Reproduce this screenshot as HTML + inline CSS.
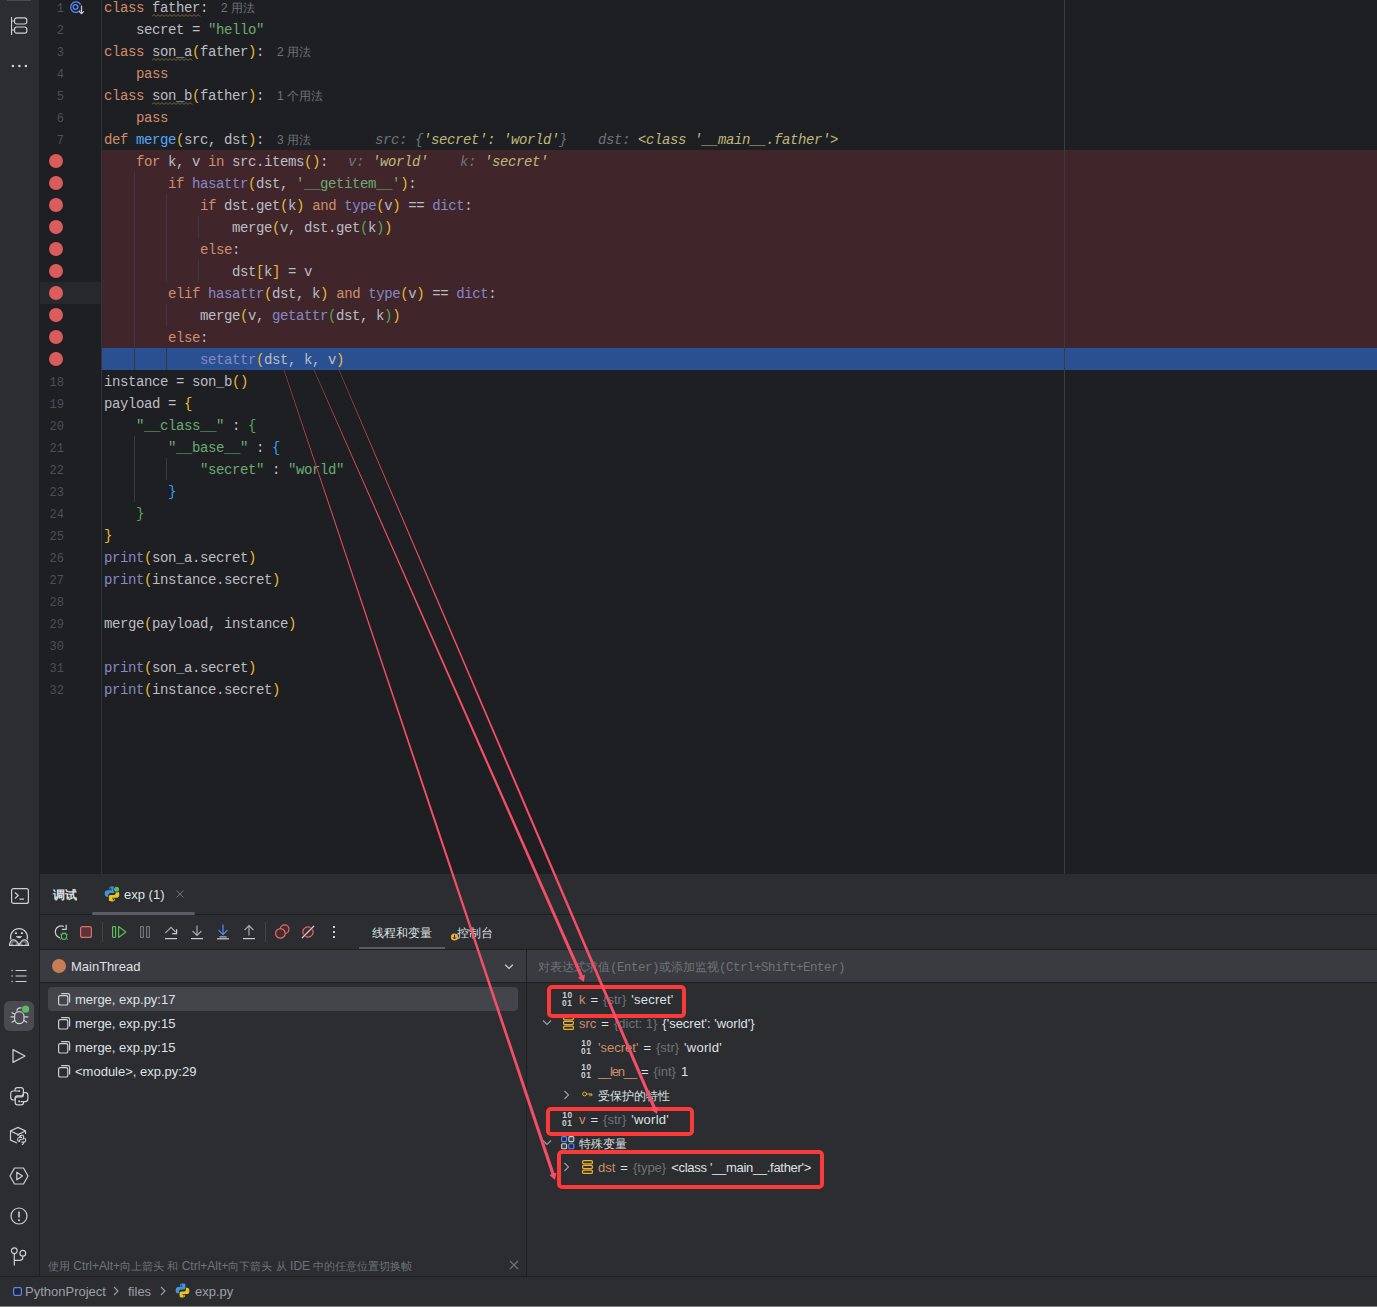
<!DOCTYPE html>
<html><head><meta charset="utf-8">
<style>
*{margin:0;padding:0;box-sizing:border-box}
html,body{width:1377px;height:1307px;overflow:hidden;background:#2b2d30}
body{position:relative;font-family:"Liberation Sans",sans-serif}
.abs{position:absolute}
#ltb{left:0;top:0;width:39px;height:1276px;background:#2b2d30}
#ed{left:39px;top:0;width:1338px;height:874px;background:#1e1f22;overflow:hidden}
#gutline{left:62px;top:0;width:1px;height:874px;background:#313438}
#rmargin{left:1025px;top:0;width:1px;height:874px;background:#393b40}
.row{position:absolute;left:63px;width:1275px;height:22px}
.bp{background:#40262b}
.ex{background:#2a5092}
.code{position:absolute;margin-top:1px;left:65px;font-family:"Liberation Mono",monospace;font-size:14px;letter-spacing:-0.4px;line-height:22px;white-space:pre;color:#bcbec4}
.ln{position:absolute;left:0;margin-top:2px;width:25px;text-align:right;font-family:"Liberation Mono",monospace;font-size:12px;line-height:22px;color:#4b5059}
.dot{position:absolute;left:10px;width:14px;height:14px;border-radius:50%;background:#db5c5c}
.k{color:#cf8e6d}.s{color:#6aab73}.f{color:#56a8f5}.b{color:#8888c6}
.p1{color:#e8ba36}.p2{color:#54a857}.p3{color:#359ff4}
.hint{font-family:"Liberation Sans",sans-serif;font-size:12px;color:#6f737a;margin-left:5px;letter-spacing:0}
.iv{font-style:italic;color:#6f737a}.ivv{font-style:italic;color:#bfb87c}
.sq{}
.ui{font-family:"Liberation Sans",sans-serif}.mono{font-family:"Liberation Mono",monospace}.bold{font-weight:bold}
.guide{position:absolute;width:1px;background:#393b40}

</style></head><body>
<div id="ltb" class="abs"></div>
<div class="abs" style="left:39px;top:0;width:1px;height:1276px;background:#1e1f22;z-index:1"></div>
<div id="ed" class="abs">
<div class="row" style="top:-4px"></div>
<div class="row" style="top:18px"></div>
<div class="row" style="top:40px"></div>
<div class="row" style="top:62px"></div>
<div class="row" style="top:84px"></div>
<div class="row" style="top:106px"></div>
<div class="row" style="top:128px"></div>
<div class="row bp" style="top:150px"></div>
<div class="row bp" style="top:172px"></div>
<div class="row bp" style="top:194px"></div>
<div class="row bp" style="top:216px"></div>
<div class="row bp" style="top:238px"></div>
<div class="row bp" style="top:260px"></div>
<div class="row bp" style="top:282px"></div>
<div class="row bp" style="top:304px"></div>
<div class="row bp" style="top:326px"></div>
<div class="row ex" style="top:348px"></div>
<div class="row" style="top:370px"></div>
<div class="row" style="top:392px"></div>
<div class="row" style="top:414px"></div>
<div class="row" style="top:436px"></div>
<div class="row" style="top:458px"></div>
<div class="row" style="top:480px"></div>
<div class="row" style="top:502px"></div>
<div class="row" style="top:524px"></div>
<div class="row" style="top:546px"></div>
<div class="row" style="top:568px"></div>
<div class="row" style="top:590px"></div>
<div class="row" style="top:612px"></div>
<div class="row" style="top:634px"></div>
<div class="row" style="top:656px"></div>
<div class="row" style="top:678px"></div>
<div class="abs" style="left:1px;top:282px;width:61px;height:22px;background:#26282b"></div>
<div id="gutline" class="abs"></div>
<div class="guide" style="left:95px;top:172px;height:198px"></div><div class="guide" style="left:127px;top:194px;height:88px"></div><div class="guide" style="left:127px;top:304px;height:22px"></div><div class="guide" style="left:127px;top:348px;height:22px"></div><div class="guide" style="left:159px;top:216px;height:22px"></div><div class="guide" style="left:159px;top:260px;height:22px"></div><div class="guide" style="left:95px;top:436px;height:66px"></div><div class="guide" style="left:127px;top:458px;height:22px"></div>
<div class="ln" style="top:-4px">1</div>
<div class="ln" style="top:18px">2</div>
<div class="ln" style="top:40px">3</div>
<div class="ln" style="top:62px">4</div>
<div class="ln" style="top:84px">5</div>
<div class="ln" style="top:106px">6</div>
<div class="ln" style="top:128px">7</div>
<div class="dot" style="top:154px"></div>
<div class="dot" style="top:176px"></div>
<div class="dot" style="top:198px"></div>
<div class="dot" style="top:220px"></div>
<div class="dot" style="top:242px"></div>
<div class="dot" style="top:264px"></div>
<div class="dot" style="top:286px"></div>
<div class="dot" style="top:308px"></div>
<div class="dot" style="top:330px"></div>
<div class="dot" style="top:352px"></div>
<div class="ln" style="top:370px">18</div>
<div class="ln" style="top:392px">19</div>
<div class="ln" style="top:414px">20</div>
<div class="ln" style="top:436px">21</div>
<div class="ln" style="top:458px">22</div>
<div class="ln" style="top:480px">23</div>
<div class="ln" style="top:502px">24</div>
<div class="ln" style="top:524px">25</div>
<div class="ln" style="top:546px">26</div>
<div class="ln" style="top:568px">27</div>
<div class="ln" style="top:590px">28</div>
<div class="ln" style="top:612px">29</div>
<div class="ln" style="top:634px">30</div>
<div class="ln" style="top:656px">31</div>
<div class="ln" style="top:678px">32</div>
<div class="code" style="top:-4px"><span class="k">class</span> <span class="sq">father</span>: <span class="hint">2 用法</span></div>
<div class="code" style="top:18px">    secret = <span class="s">&quot;hello&quot;</span></div>
<div class="code" style="top:40px"><span class="k">class</span> <span class="sq">son_a</span><span class="p1">(</span>father<span class="p1">)</span>: <span class="hint">2 用法</span></div>
<div class="code" style="top:62px">    <span class="k">pass</span></div>
<div class="code" style="top:84px"><span class="k">class</span> <span class="sq">son_b</span><span class="p1">(</span>father<span class="p1">)</span>: <span class="hint">1 个用法</span></div>
<div class="code" style="top:106px">    <span class="k">pass</span></div>
<div class="code" style="top:128px"><span class="k">def</span> <span class="f">merge</span><span class="p1">(</span>src, dst<span class="p1">)</span>: <span class="hint">3 用法</span></div>
<div class="code" style="top:150px">    <span class="k">for</span> k, v <span class="k">in</span> src.items<span class="p1">()</span>:</div>
<div class="code" style="top:172px">        <span class="k">if</span> <span class="b">hasattr</span><span class="p1">(</span>dst, <span class="s">&#x27;__getitem__&#x27;</span><span class="p1">)</span>:</div>
<div class="code" style="top:194px">            <span class="k">if</span> dst.get<span class="p1">(</span>k<span class="p1">)</span> <span class="k">and</span> <span class="b">type</span><span class="p1">(</span>v<span class="p1">)</span> == <span class="b">dict</span>:</div>
<div class="code" style="top:216px">                merge<span class="p1">(</span>v, dst.get<span class="p2">(</span>k<span class="p2">)</span><span class="p1">)</span></div>
<div class="code" style="top:238px">            <span class="k">else</span>:</div>
<div class="code" style="top:260px">                dst<span class="p1">[</span>k<span class="p1">]</span> = v</div>
<div class="code" style="top:282px">        <span class="k">elif</span> <span class="b">hasattr</span><span class="p1">(</span>dst, k<span class="p1">)</span> <span class="k">and</span> <span class="b">type</span><span class="p1">(</span>v<span class="p1">)</span> == <span class="b">dict</span>:</div>
<div class="code" style="top:304px">            merge<span class="p1">(</span>v, <span class="b">getattr</span><span class="p2">(</span>dst, k<span class="p2">)</span><span class="p1">)</span></div>
<div class="code" style="top:326px">        <span class="k">else</span>:</div>
<div class="code" style="top:348px">            <span class="b">setattr</span><span class="p1">(</span>dst, k, v<span class="p1">)</span></div>
<div class="code" style="top:370px">instance = son_b<span class="p1">()</span></div>
<div class="code" style="top:392px">payload = <span class="p1">{</span></div>
<div class="code" style="top:414px">    <span class="s">&quot;__class__&quot;</span> : <span class="p2">{</span></div>
<div class="code" style="top:436px">        <span class="s">&quot;__base__&quot;</span> : <span class="p3">{</span></div>
<div class="code" style="top:458px">            <span class="s">&quot;secret&quot;</span> : <span class="s">&quot;world&quot;</span></div>
<div class="code" style="top:480px">        <span class="p3">}</span></div>
<div class="code" style="top:502px">    <span class="p2">}</span></div>
<div class="code" style="top:524px"><span class="p1">}</span></div>
<div class="code" style="top:546px"><span class="b">print</span><span class="p1">(</span>son_a.secret<span class="p1">)</span></div>
<div class="code" style="top:568px"><span class="b">print</span><span class="p1">(</span>instance.secret<span class="p1">)</span></div>
<div class="code" style="top:590px"></div>
<div class="code" style="top:612px">merge<span class="p1">(</span>payload, instance<span class="p1">)</span></div>
<div class="code" style="top:634px"></div>
<div class="code" style="top:656px"><span class="b">print</span><span class="p1">(</span>son_a.secret<span class="p1">)</span></div>
<div class="code" style="top:678px"><span class="b">print</span><span class="p1">(</span>instance.secret<span class="p1">)</span></div>
<div class="code" style="top:128px;left:336px"><span class="iv">src: </span><span class="ivv"><span class="iv">{</span>'secret': 'world'<span class="iv">}</span></span></div>
<div class="code" style="top:128px;left:559px"><span class="iv">dst: </span><span class="ivv">&lt;class '__main__.father'&gt;</span></div>
<div class="code" style="top:150px;left:309px"><span class="iv">v: </span><span class="ivv">'world'</span></div>
<div class="code" style="top:150px;left:421px"><span class="iv">k: </span><span class="ivv">'secret'</span></div>
<svg class="abs" style="left:113px;top:14px" width="50" height="3"><polyline points="0.0,2.5 2.0,0.5 4.0,2.5 6.0,0.5 8.0,2.5 10.0,0.5 12.0,2.5 14.0,0.5 16.0,2.5 18.0,0.5 20.0,2.5 22.0,0.5 24.0,2.5 26.0,0.5 28.0,2.5 30.0,0.5 32.0,2.5 34.0,0.5 36.0,2.5 38.0,0.5 40.0,2.5 42.0,0.5 44.0,2.5 46.0,0.5 48.0,2.5" fill="none" stroke="#8a7646" stroke-width="0.85"/></svg><svg class="abs" style="left:113px;top:58px" width="42" height="3"><polyline points="0.0,2.5 2.0,0.5 4.0,2.5 6.0,0.5 8.0,2.5 10.0,0.5 12.0,2.5 14.0,0.5 16.0,2.5 18.0,0.5 20.0,2.5 22.0,0.5 24.0,2.5 26.0,0.5 28.0,2.5 30.0,0.5 32.0,2.5 34.0,0.5 36.0,2.5 38.0,0.5 40.0,2.5" fill="none" stroke="#8a7646" stroke-width="0.85"/></svg><svg class="abs" style="left:113px;top:102px" width="42" height="3"><polyline points="0.0,2.5 2.0,0.5 4.0,2.5 6.0,0.5 8.0,2.5 10.0,0.5 12.0,2.5 14.0,0.5 16.0,2.5 18.0,0.5 20.0,2.5 22.0,0.5 24.0,2.5 26.0,0.5 28.0,2.5 30.0,0.5 32.0,2.5 34.0,0.5 36.0,2.5 38.0,0.5 40.0,2.5" fill="none" stroke="#8a7646" stroke-width="0.85"/></svg>
<div id="rmargin" class="abs"></div>
<svg class="abs" style="left:29px;top:0" width="20" height="18" viewBox="0 0 20 18">
 <path d="M12.3 10.2 A5.3 5.3 0 1 1 12.6 4.6" fill="none" stroke="#548af7" stroke-width="1.3"/>
 <circle cx="7.5" cy="7" r="2.4" fill="none" stroke="#548af7" stroke-width="1.3"/>
 <path d="M13.5 5.6 V13.6 M11.2 11.3 L13.5 13.7 L15.8 11.3" fill="none" stroke="#ced0d6" stroke-width="1.2"/>
</svg>
</div>
<!-- left toolbar top icons -->
<div class="abs" style="left:7px;top:0;width:24px;height:1px;background:#4a4c51"></div>
<svg class="abs" style="left:11px;top:17px" width="18" height="18" viewBox="0 0 18 18">
 <path d="M0.5 0 V18 M0.5 4 H3 M0.5 13 H3" fill="none" stroke="#ced0d6" stroke-width="1.2"/>
 <rect x="3.5" y="0.8" width="12.3" height="6.2" rx="2.2" fill="none" stroke="#ced0d6" stroke-width="1.2"/>
 <rect x="3.5" y="10" width="12.3" height="6.2" rx="2.2" fill="none" stroke="#ced0d6" stroke-width="1.2"/>
</svg>
<svg class="abs" style="left:10px;top:62px" width="20" height="8" viewBox="0 0 20 8">
 <circle cx="2.9" cy="4" r="1.3" fill="#ced0d6"/><circle cx="9.4" cy="4" r="1.3" fill="#ced0d6"/><circle cx="15.9" cy="4" r="1.3" fill="#ced0d6"/>
</svg>
<div id="dbg" class="abs" style="left:40px;top:874px;width:1337px;height:402px;background:#2b2d30"></div>
<!-- tabs row -->
<div class="abs ui bold" style="left:53px;top:886px;line-height:18px;font-size:12px;color:#dfe1e5">调试</div>
<svg class="abs" style="left:104px;top:886px" width="16" height="16" viewBox="0 0 16 16">
<path d="M7.8 0.6 C5.2 0.6 5.3 1.8 5.3 1.8 V3.6 H8 V4.3 H3.3 C1.9 4.3 0.7 5.2 0.7 7.6 C0.7 10 1.7 10.9 3 10.9 H4.3 V9.1 C4.3 7.9 5.3 6.9 6.5 6.9 H9.3 C10.4 6.9 11.1 6.1 11.1 5 V2 C11.1 1 10.2 0.6 7.8 0.6 Z" fill="#3f96d8"/>
<path d="M8.2 15.4 C10.8 15.4 10.7 14.2 10.7 14.2 V12.4 H8 V11.7 H12.7 C14.1 11.7 15.3 10.8 15.3 8.4 C15.3 6 14.3 5.1 13 5.1 H11.7 V6.9 C11.7 8.1 10.7 9.1 9.5 9.1 H6.7 C5.6 9.1 4.9 9.9 4.9 11 V14 C4.9 15 5.8 15.4 8.2 15.4 Z" fill="#f0c31a"/>
<circle cx="6.6" cy="2.3" r="0.7" fill="#2b2d30"/><circle cx="9.4" cy="13.7" r="0.7" fill="#2b2d30"/><circle cx="12.6" cy="3.2" r="3.2" fill="#2b2d30"/><circle cx="12.6" cy="3.2" r="2.5" fill="#5fb865"/></svg>
<div class="abs ui" style="left:124px;top:886px;line-height:18px;font-size:13px;color:#dfe1e5">exp (1)</div>
<svg class="abs" style="left:175px;top:889px" width="10" height="10" viewBox="0 0 10 10"><path d="M1.5 1.5 L8.5 8.5 M8.5 1.5 L1.5 8.5" stroke="#6f737a" stroke-width="1"/></svg>
<div class="abs" style="left:40px;top:914px;width:1337px;height:1px;background:#1e1f22"></div>
<div class="abs" style="left:92px;top:912px;width:103px;height:3px;border-radius:2px;background:#5a5d63"></div>
<!-- toolbar -->
<svg class="abs" style="left:40px;top:915px" width="320" height="34" viewBox="40 915 320 34">
 <!-- rerun -->
 <path d="M63.8 926.5 A6 6 0 1 0 60 937.8" fill="none" stroke="#ced0d6" stroke-width="1.2"/>
 <path d="M66.2 924.8 V929.3 H61.8" fill="none" stroke="#ced0d6" stroke-width="1.2"/>
 <ellipse cx="64" cy="936.3" rx="2.6" ry="3.2" fill="#253627" stroke="#5fb865" stroke-width="1.1"/>
 <path d="M60.2 934 L61.5 935 M67.8 934 L66.5 935 M60 939.5 L61.5 938.5 M68 939.5 L66.5 938.5 M62.5 932.8 L63.3 933.5 M65.5 932.8 L64.7 933.5" stroke="#5fb865" stroke-width="1"/>
 <!-- stop -->
 <rect x="80.6" y="926.6" width="10.8" height="10.8" rx="2" fill="#5e3338" stroke="#e06c6c" stroke-width="1.2"/>
 <rect x="102" y="922" width="1" height="20" fill="#43454a"/>
 <!-- resume -->
 <rect x="112.6" y="926.6" width="3" height="10.8" rx="0.8" fill="#253627" stroke="#5fb865" stroke-width="1.2"/>
 <path d="M118.6 926.6 L125.8 932 L118.6 937.4 Z" fill="#253627" stroke="#5fb865" stroke-width="1.2" stroke-linejoin="round"/>
 <!-- pause -->
 <rect x="140.6" y="926.6" width="2.8" height="10.8" rx="0.6" fill="none" stroke="#6f737a" stroke-width="1.2"/>
 <rect x="146.6" y="926.6" width="2.8" height="10.8" rx="0.6" fill="none" stroke="#6f737a" stroke-width="1.2"/>
 <!-- step over -->
 <path d="M165.2 933.2 L171 927.4 L175.6 932" fill="none" stroke="#a8abb0" stroke-width="1.2"/>
 <path d="M172.2 933.6 H176.6 V929.2" fill="none" stroke="#ced0d6" stroke-width="1.2"/>
 <rect x="165" y="938" width="12" height="1.2" fill="#ced0d6"/>
 <!-- step into -->
 <path d="M197 925.4 V935.2 M192.6 931 L197 935.4 L201.4 931" fill="none" stroke="#a8abb0" stroke-width="1.2"/>
 <rect x="191" y="938" width="12" height="1.2" fill="#ced0d6"/>
 <!-- step into my code -->
 <path d="M223 924.6 V934.4 M218.6 930.2 L223 934.6 L227.4 930.2" fill="none" stroke="#548af7" stroke-width="1.2"/>
 <rect x="219.4" y="936.4" width="7.2" height="1" fill="#ced0d6"/>
 <rect x="217" y="938.2" width="12" height="1.2" fill="#ced0d6"/>
 <!-- step out -->
 <path d="M249 935.6 V925.8 M244.6 930 L249 925.6 L253.4 930" fill="none" stroke="#a8abb0" stroke-width="1.2"/>
 <rect x="243" y="938" width="12" height="1.2" fill="#ced0d6"/>
 <rect x="265" y="922" width="1" height="20" fill="#43454a"/>
 <!-- view breakpoints -->
 <circle cx="284.6" cy="929.2" r="4.4" fill="#4a2a2d" stroke="#e06c6c" stroke-width="1.2"/>
 <circle cx="280.4" cy="933.4" r="4.8" fill="#4a2a2d" stroke="#e06c6c" stroke-width="1.2"/>
 <!-- mute -->
 <circle cx="308" cy="932" r="5.2" fill="#4a2a2d" stroke="#e06c6c" stroke-width="1.2"/>
 <path d="M302 938 L314 926" stroke="#2b2d30" stroke-width="2.6"/>
 <path d="M302 938 L314 926" stroke="#ced0d6" stroke-width="1.2"/>
 <!-- more -->
 <rect x="333" y="926" width="2" height="2" fill="#ced0d6"/><rect x="333" y="931" width="2" height="2" fill="#ced0d6"/><rect x="333" y="936" width="2" height="2" fill="#ced0d6"/>
</svg>
<div class="abs ui" style="left:372px;top:924px;line-height:18px;font-size:12px;color:#dfe1e5">线程和变量</div>
<div class="abs" style="left:359px;top:947px;width:86px;height:3px;background:#5a5d63"></div>
<svg class="abs" style="left:450px;top:932px" width="10" height="10" viewBox="0 0 10 10"><circle cx="4.5" cy="5" r="3.6" fill="#e8b23a"/><path d="M4.5 2.6 V6.8 M2.8 5.2 L4.5 6.9 L6.2 5.2" fill="none" stroke="#2b2d30" stroke-width="1"/></svg>
<div class="abs ui" style="left:457px;top:924px;line-height:18px;font-size:12px;color:#dfe1e5">控制台</div>
<div class="abs" style="left:40px;top:949px;width:1337px;height:1px;background:#1e1f22"></div>
<!-- thread row -->
<div class="abs" style="left:40px;top:950px;width:486px;height:32px;background:#393b40"></div>
<div class="abs" style="left:52px;top:959px;width:14px;height:14px;border-radius:50%;background:#c77d55"></div>
<div class="abs ui" style="left:71px;top:958px;line-height:18px;font-size:13px;color:#dfe1e5">MainThread</div>
<svg class="abs" style="left:503px;top:962px" width="12" height="8" viewBox="0 0 12 8"><path d="M2.2 2.8 L6 6.4 L9.8 2.8" fill="none" stroke="#ced0d6" stroke-width="1.2"/></svg>
<div class="abs" style="left:40px;top:982px;width:1337px;height:1px;background:#1e1f22"></div>
<div class="abs" style="left:526px;top:950px;width:1px;height:326px;background:#1e1f22"></div>
<!-- frames -->
<div class="abs" style="left:48px;top:987px;width:470px;height:24px;border-radius:4px;background:#43454a"></div>
<svg class="abs" style="left:57px;top:993px" width="14" height="14" viewBox="0 0 14 14">
<path d="M4.2 0.6 H10.8 Q12.6 0.6 12.6 2.4 V9.4" fill="none" stroke="#ced0d6" stroke-width="1.2"/>
<rect x="1.6" y="2.6" width="9.2" height="9.4" rx="1.6" fill="none" stroke="#ced0d6" stroke-width="1.2"/>
</svg><div class="abs ui" style="left:75px;top:991px;line-height:18px;font-size:13px;color:#dfe1e5;white-space:pre">merge, exp.py:17</div>
<svg class="abs" style="left:57px;top:1017px" width="14" height="14" viewBox="0 0 14 14">
<path d="M4.2 0.6 H10.8 Q12.6 0.6 12.6 2.4 V9.4" fill="none" stroke="#ced0d6" stroke-width="1.2"/>
<rect x="1.6" y="2.6" width="9.2" height="9.4" rx="1.6" fill="none" stroke="#ced0d6" stroke-width="1.2"/>
</svg><div class="abs ui" style="left:75px;top:1015px;line-height:18px;font-size:13px;color:#dfe1e5;white-space:pre">merge, exp.py:15</div>
<svg class="abs" style="left:57px;top:1041px" width="14" height="14" viewBox="0 0 14 14">
<path d="M4.2 0.6 H10.8 Q12.6 0.6 12.6 2.4 V9.4" fill="none" stroke="#ced0d6" stroke-width="1.2"/>
<rect x="1.6" y="2.6" width="9.2" height="9.4" rx="1.6" fill="none" stroke="#ced0d6" stroke-width="1.2"/>
</svg><div class="abs ui" style="left:75px;top:1039px;line-height:18px;font-size:13px;color:#dfe1e5;white-space:pre">merge, exp.py:15</div>
<svg class="abs" style="left:57px;top:1065px" width="14" height="14" viewBox="0 0 14 14">
<path d="M4.2 0.6 H10.8 Q12.6 0.6 12.6 2.4 V9.4" fill="none" stroke="#ced0d6" stroke-width="1.2"/>
<rect x="1.6" y="2.6" width="9.2" height="9.4" rx="1.6" fill="none" stroke="#ced0d6" stroke-width="1.2"/>
</svg><div class="abs ui" style="left:75px;top:1063px;line-height:18px;font-size:13px;color:#dfe1e5;white-space:pre">&lt;module&gt;, exp.py:29</div>

<!-- eval bar -->
<div class="abs" style="left:527px;top:950px;width:850px;height:32px;background:#393b40"></div>
<div class="abs" style="left:538px;top:958px;line-height:18px;font-size:12px;color:#6f737a;white-space:pre"><span class="ui">对表达式求值</span><span class="mono" style="font-size:12.5px;letter-spacing:-0.5px">(Enter)</span><span class="ui">或添加监视</span><span class="mono" style="font-size:12.5px;letter-spacing:-0.5px">(Ctrl+Shift+Enter)</span></div>
<svg class="abs" style="left:562px;top:991px" width="14" height="16" viewBox="0 0 14 16">
<text x="0.3" y="7" font-family="Liberation Sans" font-weight="bold" font-size="8.4" fill="#ced0d6" letter-spacing="0.6">10</text>
<text x="0.1" y="14.9" font-family="Liberation Sans" font-weight="bold" font-size="8.4" fill="#ced0d6" letter-spacing="0.6">01</text>
</svg><div class="abs ui" style="left:579px;top:991px;line-height:18px;font-size:13px;color:#dfe1e5;white-space:pre"><span style="color:#cf8e6d;letter-spacing:0px">k</span><span style="margin:0 5px">=</span><span style="color:#6f737a">{str}</span><span style="margin-left:5px;letter-spacing:0.25px">'secret'</span></div>
<svg class="abs" style="left:542px;top:1019px" width="10" height="7" viewBox="0 0 10 7"><path d="M1 1.5 L5 5.5 L9 1.5" fill="none" stroke="#9da0a8" stroke-width="1.1"/></svg><svg class="abs" style="left:563px;top:1016px" width="12" height="14" viewBox="0 0 12 14">
<rect x="0.6" y="0.6" width="9.8" height="3.2" rx="1" fill="#3b3222" stroke="#e8b23a" stroke-width="1.2"/>
<rect x="0.6" y="5.4" width="9.8" height="3.2" rx="1" fill="#3b3222" stroke="#e8b23a" stroke-width="1.2"/>
<rect x="0.6" y="10.2" width="9.8" height="3.2" rx="1" fill="#3b3222" stroke="#e8b23a" stroke-width="1.2"/>
</svg><div class="abs ui" style="left:579px;top:1015px;line-height:18px;font-size:13px;color:#dfe1e5;white-space:pre"><span style="color:#cf8e6d;letter-spacing:0px">src</span><span style="margin:0 5px">=</span><span style="color:#6f737a">{dict: 1}</span><span style="margin-left:5px;letter-spacing:0px">{'secret': 'world'}</span></div>
<svg class="abs" style="left:581px;top:1039px" width="14" height="16" viewBox="0 0 14 16">
<text x="0.3" y="7" font-family="Liberation Sans" font-weight="bold" font-size="8.4" fill="#ced0d6" letter-spacing="0.6">10</text>
<text x="0.1" y="14.9" font-family="Liberation Sans" font-weight="bold" font-size="8.4" fill="#ced0d6" letter-spacing="0.6">01</text>
</svg><div class="abs ui" style="left:598px;top:1039px;line-height:18px;font-size:13px;color:#dfe1e5;white-space:pre"><span style="color:#cf8e6d;letter-spacing:0px">'secret'</span><span style="margin:0 5px">=</span><span style="color:#6f737a">{str}</span><span style="margin-left:5px;letter-spacing:0.25px">'world'</span></div>
<svg class="abs" style="left:581px;top:1063px" width="14" height="16" viewBox="0 0 14 16">
<text x="0.3" y="7" font-family="Liberation Sans" font-weight="bold" font-size="8.4" fill="#ced0d6" letter-spacing="0.6">10</text>
<text x="0.1" y="14.9" font-family="Liberation Sans" font-weight="bold" font-size="8.4" fill="#ced0d6" letter-spacing="0.6">01</text>
</svg><div class="abs ui" style="left:598px;top:1063px;line-height:18px;font-size:13px;color:#dfe1e5;white-space:pre"><span style="color:#cf8e6d;letter-spacing:-1.2px">__len__</span><span style="margin:0 5px">=</span><span style="color:#6f737a">{int}</span><span style="margin-left:5px;letter-spacing:0.25px">1</span></div>
<svg class="abs" style="left:563px;top:1090px" width="7" height="10" viewBox="0 0 7 10"><path d="M1.5 1 L5.5 5 L1.5 9" fill="none" stroke="#9da0a8" stroke-width="1.1"/></svg><svg class="abs" style="left:582px;top:1091px" width="11" height="8" viewBox="0 0 11 8"><circle cx="2.6" cy="3" r="1.9" fill="none" stroke="#e0ac3c" stroke-width="1"/><path d="M4.6 3 H10 M8 3 V5.4 M9.8 3 V5" fill="none" stroke="#e0ac3c" stroke-width="1"/></svg><div class="abs ui" style="left:598px;top:1087px;line-height:18px;font-size:12px;color:#dfe1e5">受保护的特性</div>
<svg class="abs" style="left:562px;top:1111px" width="14" height="16" viewBox="0 0 14 16">
<text x="0.3" y="7" font-family="Liberation Sans" font-weight="bold" font-size="8.4" fill="#ced0d6" letter-spacing="0.6">10</text>
<text x="0.1" y="14.9" font-family="Liberation Sans" font-weight="bold" font-size="8.4" fill="#ced0d6" letter-spacing="0.6">01</text>
</svg><div class="abs ui" style="left:579px;top:1111px;line-height:18px;font-size:13px;color:#dfe1e5;white-space:pre"><span style="color:#cf8e6d;letter-spacing:0px">v</span><span style="margin:0 5px">=</span><span style="color:#6f737a">{str}</span><span style="margin-left:5px;letter-spacing:0.25px">'world'</span></div>
<svg class="abs" style="left:542px;top:1139px" width="10" height="7" viewBox="0 0 10 7"><path d="M1 1.5 L5 5.5 L9 1.5" fill="none" stroke="#9da0a8" stroke-width="1.1"/></svg><svg class="abs" style="left:561px;top:1136px" width="14" height="14" viewBox="0 0 14 14">
<rect x="0.6" y="0.6" width="5" height="5" rx="1" fill="#1f2d4a" stroke="#548af7" stroke-width="1.1"/>
<rect x="7.8" y="0.6" width="5" height="5" rx="1" fill="#43454a" stroke="#ced0d6" stroke-width="1.1"/>
<rect x="0.6" y="7.8" width="5" height="5" rx="1" fill="#43454a" stroke="#ced0d6" stroke-width="1.1"/>
<rect x="7.8" y="7.8" width="5" height="5" rx="1" fill="#1f2d4a" stroke="#548af7" stroke-width="1.1"/>
</svg><div class="abs ui" style="left:579px;top:1135px;line-height:18px;font-size:12px;color:#dfe1e5">特殊变量</div>
<svg class="abs" style="left:563px;top:1162px" width="7" height="10" viewBox="0 0 7 10"><path d="M1.5 1 L5.5 5 L1.5 9" fill="none" stroke="#9da0a8" stroke-width="1.1"/></svg><svg class="abs" style="left:582px;top:1160px" width="12" height="14" viewBox="0 0 12 14">
<rect x="0.6" y="0.6" width="9.8" height="3.2" rx="1" fill="#3b3222" stroke="#e8b23a" stroke-width="1.2"/>
<rect x="0.6" y="5.4" width="9.8" height="3.2" rx="1" fill="#3b3222" stroke="#e8b23a" stroke-width="1.2"/>
<rect x="0.6" y="10.2" width="9.8" height="3.2" rx="1" fill="#3b3222" stroke="#e8b23a" stroke-width="1.2"/>
</svg><div class="abs ui" style="left:598px;top:1159px;line-height:18px;font-size:13px;color:#dfe1e5;white-space:pre"><span style="color:#cf8e6d;letter-spacing:0px">dst</span><span style="margin:0 5px">=</span><span style="color:#6f737a">{type}</span><span style="margin-left:5px;letter-spacing:-0.3px">&lt;class '__main__.father'&gt;</span></div>

<!-- tip -->
<div class="abs ui" style="left:48px;top:1257px;line-height:16px;color:#6f737a;white-space:pre"><span style="font-size:11px">使用</span><span style="font-size:12px"> Ctrl+Alt+</span><span style="font-size:11px">向上箭头</span><span style="font-size:12px"> </span><span style="font-size:11px">和</span><span style="font-size:12px"> Ctrl+Alt+</span><span style="font-size:11px">向下箭头</span><span style="font-size:12px"> </span><span style="font-size:11px">从</span><span style="font-size:12px"> IDE </span><span style="font-size:11px">中的任意位置切换帧</span></div>
<svg class="abs" style="left:509px;top:1260px" width="10" height="10" viewBox="0 0 10 10"><path d="M1 1 L9 9 M9 1 L1 9" stroke="#6f737a" stroke-width="1.1"/></svg>
<!-- bottom left toolbar icons -->

<svg class="abs" style="left:11px;top:888px" width="18" height="16" viewBox="0 0 18 16"><rect x="0.6" y="0.6" width="16.8" height="14.8" rx="2" fill="none" stroke="#ced0d6" stroke-width="1.2"/><path d="M4 4.5 L7.2 7.5 L4 10.5 M8.5 11.2 H13" fill="none" stroke="#ced0d6" stroke-width="1.2"/></svg>
<svg class="abs" style="left:4px;top:922px" width="30" height="30" viewBox="0 0 30 30"><path d="M7 17.6 A8.4 8.4 0 1 1 23 17.6" fill="none" stroke="#ced0d6" stroke-width="1.3"/><rect x="10.8" y="10.3" width="2.2" height="1.8" rx="0.6" fill="#ced0d6"/><rect x="16.9" y="10.3" width="2.2" height="1.8" rx="0.6" fill="#ced0d6"/><path d="M12.3 14.6 Q15 17.4 17.7 14.6 Z" fill="#ced0d6" stroke="#ced0d6" stroke-width="0.8"/><path d="M5.4 23.4 Q5.8 18.4 9 17.8 Q11.6 17.6 13 19.8 L15 22.6 L17 19.8 Q18.4 17.6 21 17.8 Q24.2 18.4 24.6 23.4 Z" fill="#6a6d72" stroke="#ced0d6" stroke-width="1.1" stroke-linejoin="round"/><ellipse cx="10.4" cy="21.6" rx="1.7" ry="1.4" fill="#2b2d30"/><ellipse cx="19.6" cy="21.6" rx="1.7" ry="1.4" fill="#2b2d30"/></svg>
<svg class="abs" style="left:10px;top:968px" width="18" height="16" viewBox="0 0 18 16"><path d="M1.5 2.5 H2.6 M1.5 8 H2.6 M1.5 13.5 H2.6" fill="none" stroke="#ced0d6" stroke-width="1.6"/><path d="M5.5 2.5 H16.5 M5.5 8 H16.5 M5.5 13.5 H16.5" fill="none" stroke="#ced0d6" stroke-width="1.2"/></svg>
<div class="abs" style="left:4px;top:1001px;width:30px;height:30px;border-radius:6px;background:#494b50"></div>
<svg class="abs" style="left:4px;top:1000px" width="30" height="30" viewBox="0 0 30 30"><rect x="10.6" y="11.6" width="9.4" height="12" rx="4.7" fill="none" stroke="#ced0d6" stroke-width="1.2"/><path d="M12.9 11.6 C12.9 9 14.2 7.9 16.4 7.9 H18.4 M6.6 16.9 H10.4 M20.2 16.9 H24.4 M7.6 12.4 L10.9 14.3 M7.6 22.4 L11 20.3 M19.6 20.3 L23.2 22.4" fill="none" stroke="#ced0d6" stroke-width="1.2"/><circle cx="21.6" cy="9.2" r="4.4" fill="#494b50"/><circle cx="21.6" cy="9.2" r="3.6" fill="#5fb865"/></svg>
<svg class="abs" style="left:11px;top:1048px" width="16" height="16" viewBox="0 0 16 16"><path d="M2 1.6 L14 8 L2 14.4 Z" fill="none" stroke="#ced0d6" stroke-width="1.2" stroke-linejoin="round"/></svg>
<svg class="abs" style="left:10px;top:1087px" width="19" height="19" viewBox="0 0 19 19"><path d="M5.2 13 V10.8 Q5.2 8.8 7.2 8.8 H11.2 Q13.4 8.8 13.4 6.6 V3 Q13.4 0.7 11 0.7 H7.4 Q5 0.7 5 3 V4 H3 Q0.7 4 0.7 7 V10 Q0.7 13 3 13 H5.2 M8 4 H5" fill="none" stroke="#ced0d6" stroke-width="1.2" stroke-linejoin="round"/><path d="M13.4 5.6 V7.8 Q13.4 9.8 11.4 9.8 H7.4 Q5.2 9.8 5.2 12 V15.6 Q5.2 17.9 7.6 17.9 H11.2 Q13.6 17.9 13.6 15.6 V14.6 H15.6 Q17.9 14.6 17.9 11.6 V8.6 Q17.9 5.6 15.6 5.6 H13.4 M10.6 14.6 H13.6" fill="none" stroke="#ced0d6" stroke-width="1.2" stroke-linejoin="round"/><rect x="8.3" y="3.2" width="1.7" height="1.7" fill="#ced0d6"/><rect x="8.3" y="13.5" width="1.7" height="1.7" fill="#ced0d6"/></svg>
<svg class="abs" style="left:9px;top:1126px" width="20" height="20" viewBox="0 0 20 20"><path d="M8 17 L1.5 14 V5 L9 1.5 L16.5 5 V8 M1.5 5 L9 8.5 L16.5 5 M9 8.5 V10" fill="none" stroke="#ced0d6" stroke-width="1.2"/><path d="M12.5 9 C11 9 10.8 9.8 10.8 10.5 V11.5 H13 M10.8 11.5 H10 C9 11.5 8.6 12.2 8.6 13.5 C8.6 14.8 9 15.4 10 15.4 H10.6 V14.4 C10.6 13.7 11 13.3 11.7 13.3 H13.6 C14.3 13.3 14.6 12.9 14.6 12.2 V10.5 C14.6 9.6 14.2 9 12.5 9 Z M12.8 18.6 C14.3 18.6 14.5 17.8 14.5 17.1 V16.1 H12.3 M14.5 16.1 H15.3 C16.3 16.1 16.7 15.4 16.7 14.1 C16.7 12.8 16.3 12.2 15.3 12.2" fill="none" stroke="#ced0d6" stroke-width="1.1"/></svg>
<svg class="abs" style="left:9px;top:1166px" width="20" height="20" viewBox="0 0 20 20"><path d="M5.5 2 H14.5 L19 10 L14.5 18 H5.5 L1 10 Z" fill="none" stroke="#ced0d6" stroke-width="1.2" stroke-linejoin="round"/><path d="M7.8 6.2 L13.5 10 L7.8 13.8 Z" fill="none" stroke="#ced0d6" stroke-width="1.2" stroke-linejoin="round"/></svg>
<svg class="abs" style="left:10px;top:1207px" width="18" height="18" viewBox="0 0 18 18"><circle cx="9" cy="9" r="8" fill="none" stroke="#ced0d6" stroke-width="1.2"/><path d="M9 4.5 V10.5" fill="none" stroke="#ced0d6" stroke-width="1.6"/><circle cx="9" cy="13.2" r="1" fill="#ced0d6"/></svg>
<svg class="abs" style="left:10px;top:1247px" width="18" height="20" viewBox="0 0 18 20"><circle cx="4.3" cy="3.8" r="2.9" fill="none" stroke="#ced0d6" stroke-width="1.2"/><circle cx="12.8" cy="6.3" r="2.9" fill="none" stroke="#ced0d6" stroke-width="1.2"/><path d="M4.3 6.7 V18.5 M12.8 9.2 V10.6 Q12.8 13.3 10.1 13.3 H4.3" fill="none" stroke="#ced0d6" stroke-width="1.2"/></svg>


<div id="status" class="abs" style="left:0;top:1276px;width:1377px;height:31px;background:#2b2d30;border-top:1px solid #1e1f22"></div>
<svg class="abs" style="left:13px;top:1287px" width="9" height="9" viewBox="0 0 9 9"><rect x="0.6" y="0.6" width="7.8" height="7.8" rx="1.6" fill="#1f2533" stroke="#548af7" stroke-width="1.2"/></svg>
<div class="abs ui" style="left:25px;top:1283px;line-height:18px;font-size:13px;color:#9da0a8;white-space:pre">PythonProject</div>
<svg class="abs" style="left:112px;top:1286px" width="8" height="10" viewBox="0 0 8 10"><path d="M2 1 L6 5 L2 9" fill="none" stroke="#9da0a8" stroke-width="1.1"/></svg>
<div class="abs ui" style="left:128px;top:1283px;line-height:18px;font-size:13px;color:#9da0a8;white-space:pre">files</div>
<svg class="abs" style="left:159px;top:1286px" width="8" height="10" viewBox="0 0 8 10"><path d="M2 1 L6 5 L2 9" fill="none" stroke="#9da0a8" stroke-width="1.1"/></svg>
<svg class="abs" style="left:175px;top:1283px" width="15" height="15" viewBox="0 0 16 16">
<path d="M7.8 0.6 C5.2 0.6 5.3 1.8 5.3 1.8 V3.6 H8 V4.3 H3.3 C1.9 4.3 0.7 5.2 0.7 7.6 C0.7 10 1.7 10.9 3 10.9 H4.3 V9.1 C4.3 7.9 5.3 6.9 6.5 6.9 H9.3 C10.4 6.9 11.1 6.1 11.1 5 V2 C11.1 1 10.2 0.6 7.8 0.6 Z" fill="#3f96d8"/>
<path d="M8.2 15.4 C10.8 15.4 10.7 14.2 10.7 14.2 V12.4 H8 V11.7 H12.7 C14.1 11.7 15.3 10.8 15.3 8.4 C15.3 6 14.3 5.1 13 5.1 H11.7 V6.9 C11.7 8.1 10.7 9.1 9.5 9.1 H6.7 C5.6 9.1 4.9 9.9 4.9 11 V14 C4.9 15 5.8 15.4 8.2 15.4 Z" fill="#f0c31a"/>
<circle cx="6.6" cy="2.3" r="0.7" fill="#2b2d30"/><circle cx="9.4" cy="13.7" r="0.7" fill="#2b2d30"/></svg>
<div class="abs ui" style="left:195px;top:1283px;line-height:18px;font-size:13px;color:#9da0a8;white-space:pre">exp.py</div>

<div class="abs" style="left:0;top:1306px;width:1377px;height:1px;background:#7c8080"></div>
<div class="abs" style="left:547px;top:985px;width:139px;height:33px;border:4px solid #fd3a3a;border-radius:5px"></div>
<div class="abs" style="left:546px;top:1107px;width:148px;height:29px;border:4px solid #fd3a3a;border-radius:5px"></div>
<div class="abs" style="left:557px;top:1150px;width:267px;height:39px;border:4px solid #fd3a3a;border-radius:5px"></div>
<svg class="abs" style="left:0;top:0" width="1377" height="1307" viewBox="0 0 1377 1307"><polygon points="313.82,370.08 579.91,976.70 577.95,977.57 584.00,982.00 584.81,974.54 582.84,975.41 314.18,369.92" fill="#f64e66"/><polygon points="338.82,370.08 652.97,1108.65 651.00,1109.50 657.00,1114.00 657.89,1106.55 655.92,1107.39 339.18,369.92" fill="#f64e66"/><polygon points="283.81,370.06 551.42,1174.34 549.38,1175.03 555.00,1180.00 556.49,1172.65 554.46,1173.33 284.19,369.94" fill="#f64e66"/></svg>

</body></html>
